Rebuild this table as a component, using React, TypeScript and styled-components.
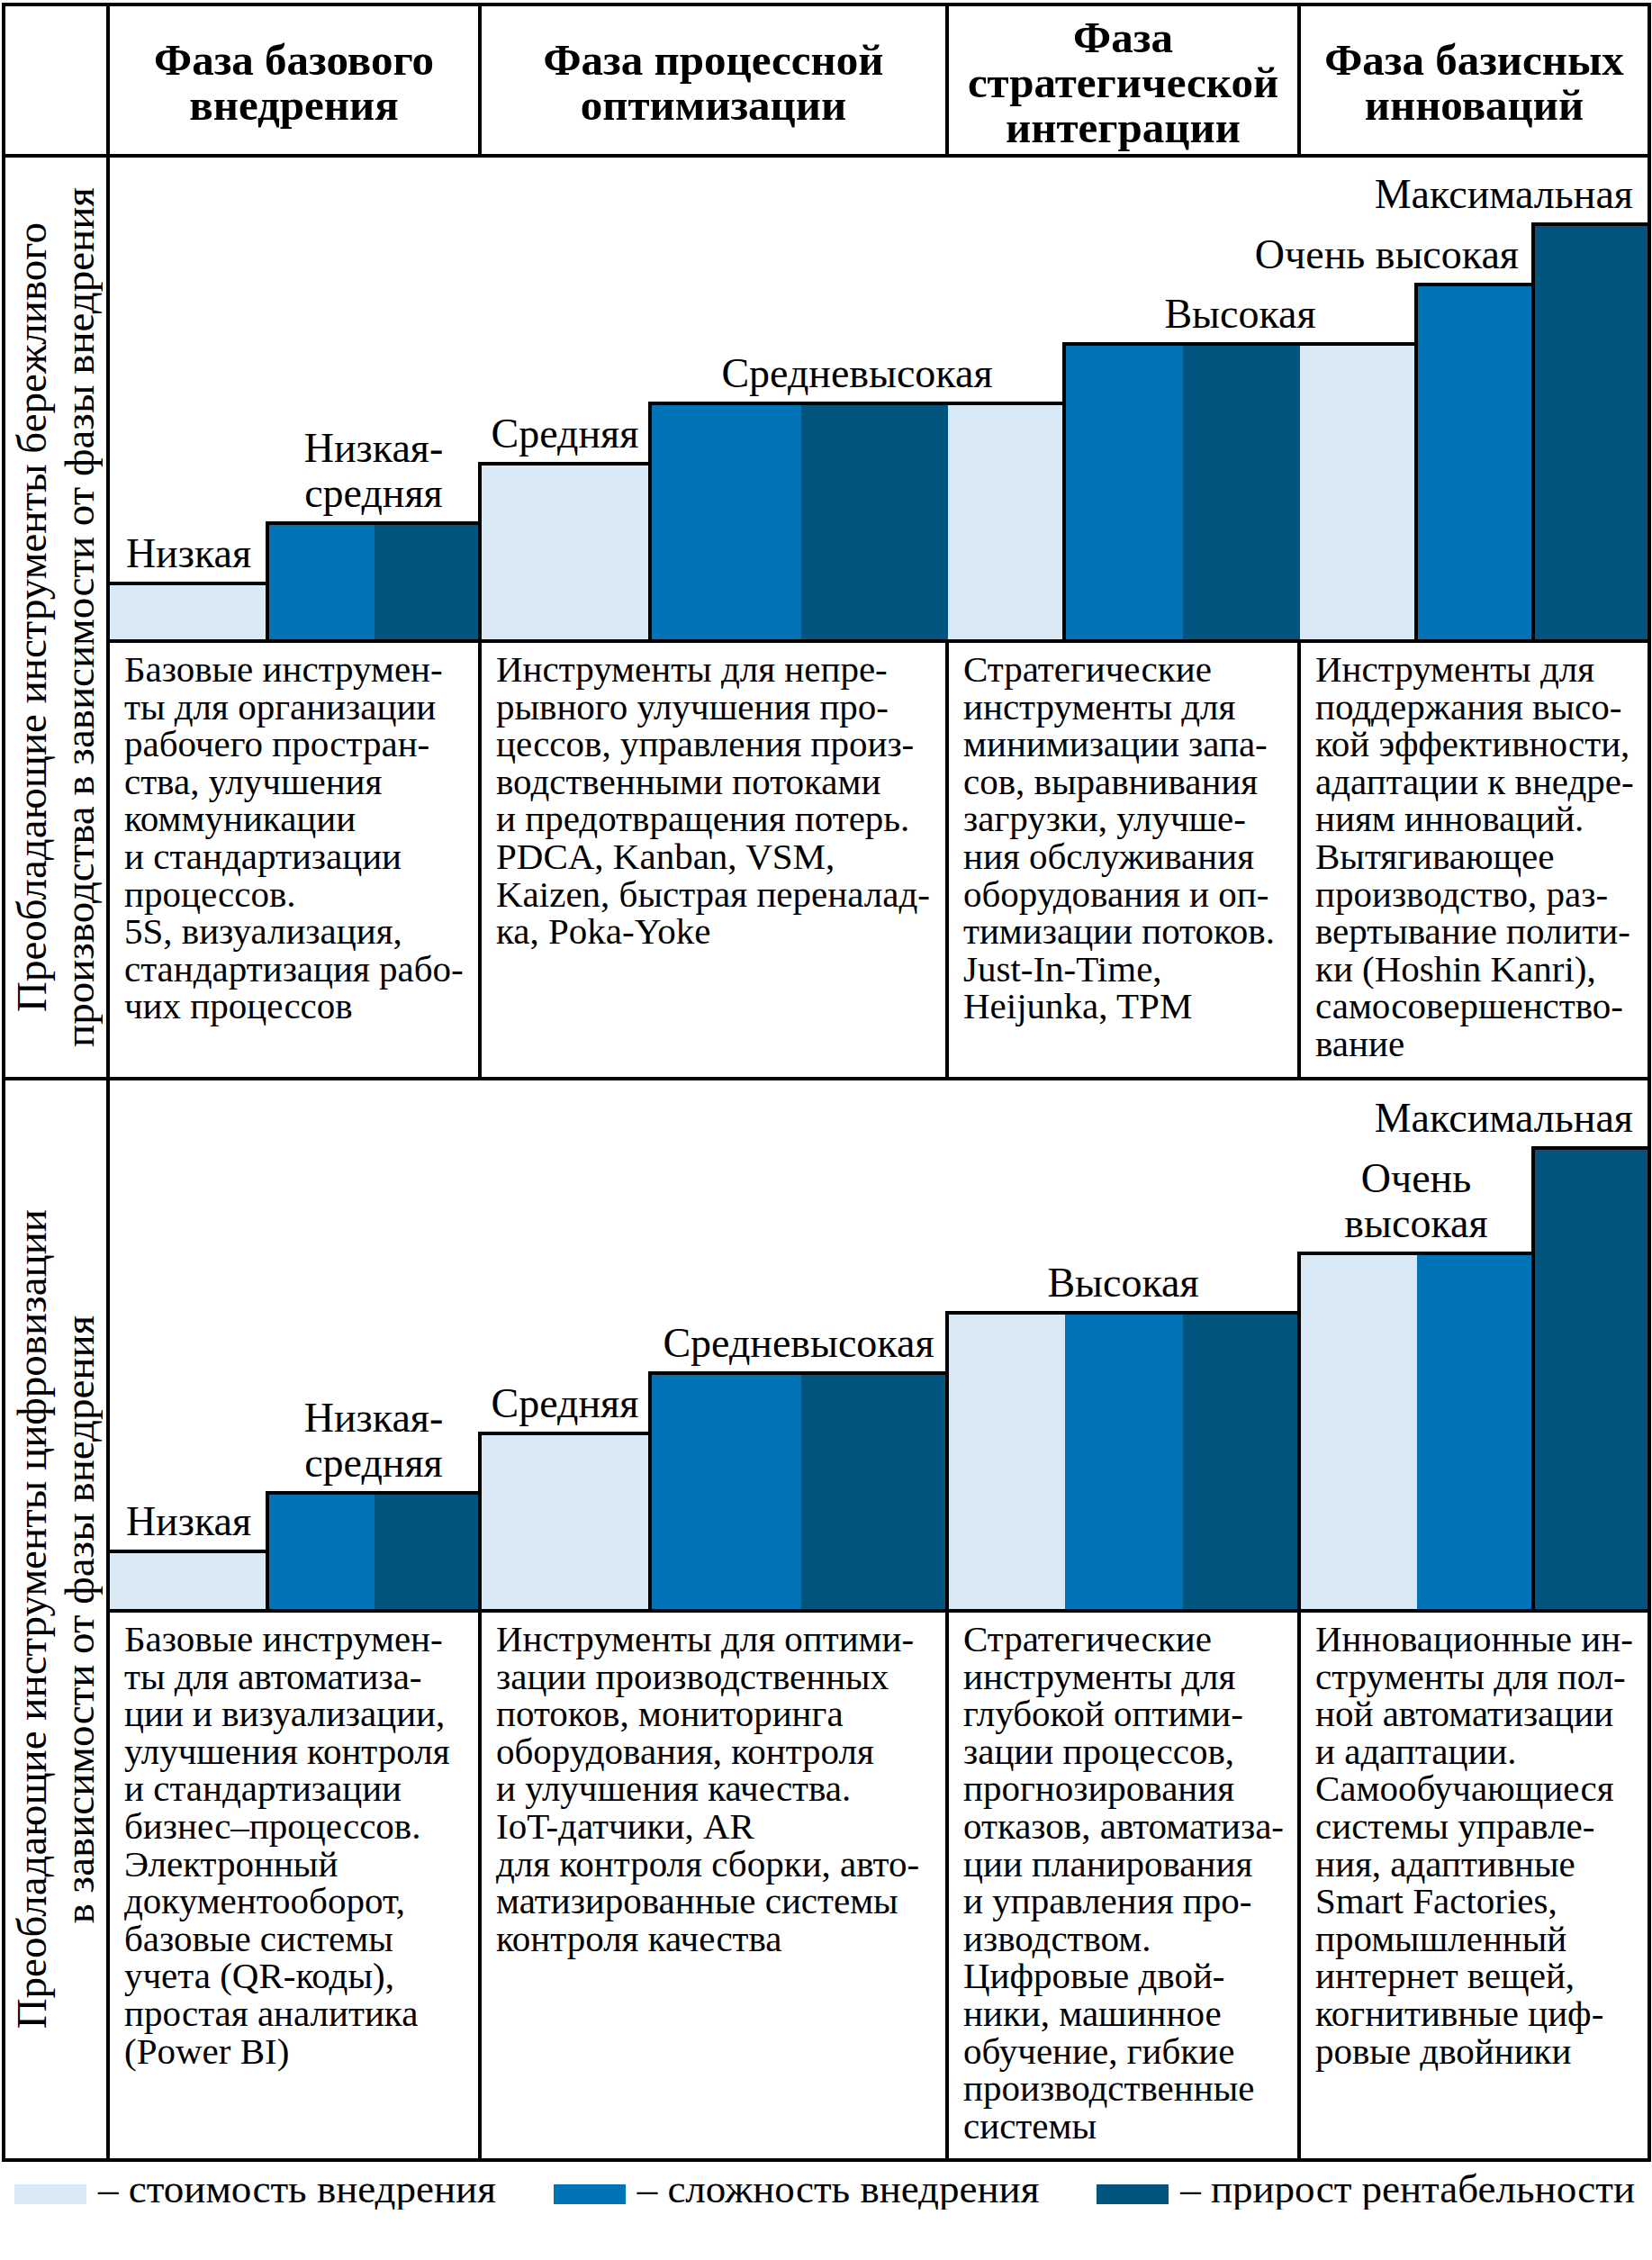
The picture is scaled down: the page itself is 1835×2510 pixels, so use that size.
import React from "react";
import styled, { createGlobalStyle } from "styled-components";

const GlobalStyle = createGlobalStyle`
  html, body {
    margin: 0;
    padding: 0;
    background: #fff;
  }
  body {
    font-family: "Liberation Serif", "Times New Roman", serif;
    color: #000;
  }
`;

type Tone = "light" | "mid" | "dark";

const tones: Record<Tone, string> = {
    light: "#dae9f6",
    mid: "#0173b6",
    dark: "#02557f",
};

const Page = styled.div`
    padding: 3px 0 0 2px;
    width: 1832px;
`;

const Table = styled.div`
    display: grid;
    grid-template-columns: 112px 409px 515px 387px 385px;
    grid-template-rows: 164px 535px 482px 587px 606px;
    gap: 4px;
    width: 1832px;
    box-sizing: border-box;
    background: #000;
    border: 4px solid #000;
`;

const Corner = styled.div`
    background: #fff;
`;

const HeadCell = styled.div`
    background: #fff;
    display: flex;
    align-items: center;
    justify-content: center;
    text-align: center;
    font-weight: 700;
    font-size: 49px;
    line-height: 50px;
    white-space: pre;
    padding-top: 6px;
`;

const SideCell = styled.div`
    grid-row: span 2;
    background: #fff;
    display: flex;
    align-items: center;
    justify-content: center;
`;

const SideText = styled.div`
    writing-mode: vertical-rl;
    transform: rotate(180deg);
    text-align: center;
    white-space: pre;
    font-size: 47px;
    line-height: 53px;
`;

const ChartCell = styled.div`
    grid-column: span 4;
    background: #fff;
    display: flex;
    align-items: flex-end;
    min-width: 0;
`;

const Step = styled.div<{ $w: number; $end?: boolean }>`
    flex: 0 0 ${(p) => p.$w}px;
    width: ${(p) => p.$w}px;
    min-width: 0;
    display: flex;
    flex-direction: column;
    align-items: ${(p) => (p.$end ? "flex-end" : "center")};
`;

const Label = styled.div<{ $end?: boolean }>`
    font-size: 46px;
    line-height: 50px;
    white-space: pre;
    text-align: center;
    margin-bottom: 6px;
    padding-right: ${(p) => (p.$end ? "16px" : "0")};
`;

const Block = styled.div<{ $h: number; $rise?: boolean }>`
    align-self: stretch;
    height: ${(p) => p.$h}px;
    box-sizing: border-box;
    border-top: 4px solid #000;
    border-left: ${(p) => (p.$rise ? "4px solid #000" : "none")};
    margin-left: ${(p) => (p.$rise ? "-2px" : "0")};
    display: flex;
`;

const Seg = styled.div<{ $grow: number; $tone: Tone }>`
    flex: ${(p) => p.$grow} 1 0px;
    background: ${(p) => tones[p.$tone]};
`;

const TextCell = styled.div`
    background: #fff;
    padding: 9px 10px 0 16px;
    font-size: 41px;
    line-height: 41.6px;
`;

const Line = styled.div`
    white-space: nowrap;
`;

const Legend = styled.div`
    display: flex;
    justify-content: space-between;
    padding: 0 18px 0 14px;
    margin-top: 8px;
`;

const LegendItem = styled.div`
    display: flex;
    align-items: center;
    gap: 13px;
    font-size: 45px;
    line-height: 45px;
    white-space: nowrap;
`;

const Swatch = styled.span<{ $tone: Tone }>`
    width: 80px;
    height: 22px;
    margin-top: 10px;
    background: ${(p) => tones[p.$tone]};
`;

type StepData = {
    w: number;
    h: number;
    label: string;
    end?: boolean;
    rise?: boolean;
    segs: [Tone, number][];
};

const leanSteps: StepData[] = [
    { w: 175, h: 64, label: "Низкая", segs: [["light", 175]] },
    { w: 236, h: 131, label: "Низкая-\nсредняя", rise: true, segs: [["mid", 118], ["dark", 118]] },
    { w: 189, h: 197, label: "Средняя", rise: true, segs: [["light", 189]] },
    { w: 460, h: 264, label: "Средневысокая", rise: true, segs: [["mid", 167], ["dark", 163], ["light", 130]] },
    { w: 391, h: 330, label: "Высокая", rise: true, segs: [["mid", 131], ["dark", 130], ["light", 130]] },
    { w: 130, h: 396, label: "Очень высокая", end: true, rise: true, segs: [["mid", 130]] },
    { w: 127, h: 463, label: "Максимальная", end: true, rise: true, segs: [["dark", 127]] },
];

const digitalSteps: StepData[] = [
    { w: 175, h: 66, label: "Низкая", segs: [["light", 175]] },
    { w: 236, h: 131, label: "Низкая-\nсредняя", rise: true, segs: [["mid", 118], ["dark", 118]] },
    { w: 189, h: 197, label: "Средняя", rise: true, segs: [["light", 189]] },
    { w: 330, h: 264, label: "Средневысокая", rise: true, segs: [["mid", 167], ["dark", 163]] },
    { w: 391, h: 331, label: "Высокая", rise: true, segs: [["light", 130], ["mid", 131], ["dark", 130]] },
    { w: 260, h: 397, label: "Очень\nвысокая", rise: true, segs: [["light", 130], ["mid", 130]] },
    { w: 127, h: 514, label: "Максимальная", end: true, rise: true, segs: [["dark", 127]] },
];

const heads = [
    "Фаза базового\nвнедрения",
    "Фаза процессной\nоптимизации",
    "Фаза\nстратегической\nинтеграции",
    "Фаза базисных\nинноваций",
];

const leanTexts: string[][] = [
    [
        "Базовые инструмен-",
        "ты для организации",
        "рабочего простран-",
        "ства, улучшения",
        "коммуникации",
        "и стандартизации",
        "процессов.",
        "5S, визуализация,",
        "стандартизация рабо-",
        "чих процессов",
    ],
    [
        "Инструменты для непре-",
        "рывного улучшения про-",
        "цессов, управления произ-",
        "водственными потоками",
        "и предотвращения потерь.",
        "PDCA, Kanban, VSM,",
        "Kaizen, быстрая переналад-",
        "ка, Poka-Yoke",
    ],
    [
        "Стратегические",
        "инструменты для",
        "минимизации запа-",
        "сов, выравнивания",
        "загрузки, улучше-",
        "ния обслуживания",
        "оборудования и оп-",
        "тимизации потоков.",
        "Just-In-Time,",
        "Heijunka, TPM",
    ],
    [
        "Инструменты для",
        "поддержания высо-",
        "кой эффективности,",
        "адаптации к внедре-",
        "ниям инноваций.",
        "Вытягивающее",
        "производство, раз-",
        "вертывание полити-",
        "ки (Hoshin Kanri),",
        "самосовершенство-",
        "вание",
    ],
];

const digitalTexts: string[][] = [
    [
        "Базовые инструмен-",
        "ты для автоматиза-",
        "ции и визуализации,",
        "улучшения контроля",
        "и стандартизации",
        "бизнес–процессов.",
        "Электронный",
        "документооборот,",
        "базовые системы",
        "учета (QR-коды),",
        "простая аналитика",
        "(Power BI)",
    ],
    [
        "Инструменты для оптими-",
        "зации производственных",
        "потоков, мониторинга",
        "оборудования, контроля",
        "и улучшения качества.",
        "IoT-датчики, AR",
        "для контроля сборки, авто-",
        "матизированные системы",
        "контроля качества",
    ],
    [
        "Стратегические",
        "инструменты для",
        "глубокой оптими-",
        "зации процессов,",
        "прогнозирования",
        "отказов, автоматиза-",
        "ции планирования",
        "и управления про-",
        "изводством.",
        "Цифровые двой-",
        "ники, машинное",
        "обучение, гибкие",
        "производственные",
        "системы",
    ],
    [
        "Инновационные ин-",
        "струменты для пол-",
        "ной автоматизации",
        "и адаптации.",
        "Самообучающиеся",
        "системы управле-",
        "ния, адаптивные",
        "Smart Factories,",
        "промышленный",
        "интернет вещей,",
        "когнитивные циф-",
        "ровые двойники",
    ],
];

function Chart({ steps }: { steps: StepData[] }) {
    return (
        <ChartCell>
            {steps.map((s, i) => (
                <Step key={i} $w={s.w} $end={s.end}>
                    <Label $end={s.end}>{s.label}</Label>
                    <Block $h={s.h} $rise={s.rise}>
                        {s.segs.map(([tone, w], j) => (
                            <Seg key={j} $tone={tone} $grow={w} />
                        ))}
                    </Block>
                </Step>
            ))}
        </ChartCell>
    );
}

function Texts({ cols }: { cols: string[][] }) {
    return (
        <>
            {cols.map((lines, i) => (
                <TextCell key={i}>
                    {lines.map((l, j) => (
                        <Line key={j}>{l}</Line>
                    ))}
                </TextCell>
            ))}
        </>
    );
}

export default function App() {
    return (
        <Page>
            <GlobalStyle />
            <Table>
                <Corner />
                {heads.map((h) => (
                    <HeadCell key={h}>{h}</HeadCell>
                ))}

                <SideCell>
                    <SideText>
                        {"Преобладающие инструменты бережливого\nпроизводства в зависимости от фазы внедрения"}
                    </SideText>
                </SideCell>
                <Chart steps={leanSteps} />
                <Texts cols={leanTexts} />

                <SideCell>
                    <SideText>
                        {"Преобладающие инструменты цифровизации\nв зависимости от фазы внедрения"}
                    </SideText>
                </SideCell>
                <Chart steps={digitalSteps} />
                <Texts cols={digitalTexts} />
            </Table>
            <Legend>
                <LegendItem>
                    <Swatch $tone="light" />
                    <span>– стоимость внедрения</span>
                </LegendItem>
                <LegendItem>
                    <Swatch $tone="mid" />
                    <span>– сложность внедрения</span>
                </LegendItem>
                <LegendItem>
                    <Swatch $tone="dark" />
                    <span>– прирост рентабельности</span>
                </LegendItem>
            </Legend>
        </Page>
    );
}
